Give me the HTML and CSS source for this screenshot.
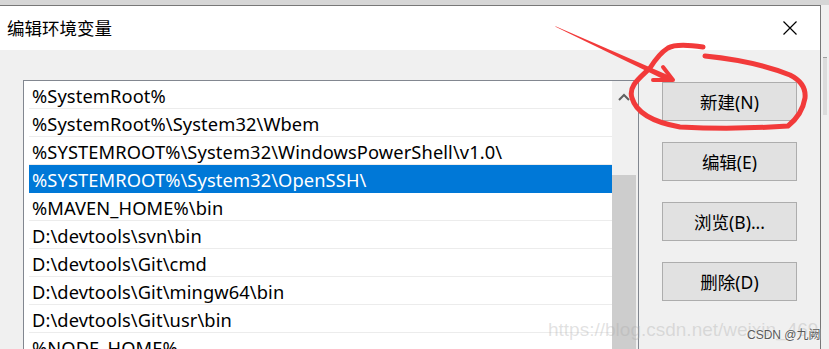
FILE: index.html
```html
<!DOCTYPE html>
<html lang="zh-CN">
<head>
    <meta charset="UTF-8">
    <title>编辑环境变量</title>
    <link rel="stylesheet" href="styles.css">
</head>
<body>
    <div class="screen">
        <!-- Dialog -->
        <div class="dialog">
            <div class="titlebar">
                <span class="title">编辑环境变量</span>
                <span class="close">
                    <svg width="16" height="16" viewBox="0 0 16 16">
                        <path d="M1.5 1.5 L14.5 14.5 M14.5 1.5 L1.5 14.5" stroke="#000" stroke-width="1.2" fill="none"/>
                    </svg>
                </span>
            </div>
            <div class="content">
                <div class="listbox">
                    <ul class="paths">
                        <li>%SystemRoot%</li>
                        <li>%SystemRoot%\System32\Wbem</li>
                        <li>%SYSTEMROOT%\System32\WindowsPowerShell\v1.0\</li>
                        <li class="selected">%SYSTEMROOT%\System32\OpenSSH\</li>
                        <li>%MAVEN_HOME%\bin</li>
                        <li>D:\devtools\svn\bin</li>
                        <li>D:\devtools\Git\cmd</li>
                        <li>D:\devtools\Git\mingw64\bin</li>
                        <li>D:\devtools\Git\usr\bin</li>
                        <li>%NODE_HOME%</li>
                    </ul>
                    <div class="scrollbar">
                        <div class="scroll-up">
                            <svg width="12" height="8" viewBox="0 0 12 8">
                                <path d="M1 7 L6 2 L11 7" stroke="#606060" stroke-width="2" fill="none"/>
                            </svg>
                        </div>
                        <div class="thumb"></div>
                    </div>
                </div>
                <div class="actions">
                    <button>新建(N)</button>
                    <button>编辑(E)</button>
                    <button>浏览(B)...</button>
                    <button>删除(D)</button>
                </div>
            </div>
        </div>
        <!-- window behind the dialog -->
        <div class="behind">
            <div class="behind-bar"></div>
        </div>
    </div>

    <!-- red hand-drawn marks -->
    <svg class="annotation" width="829" height="349" viewBox="0 0 829 349">
        <polygon points="555,26 556,27 667,81 670,76" fill="#f23a3a"/>
        <path d="M653 80 L673 80 L663 67" stroke="#f23a3a" stroke-width="4" fill="none" stroke-linecap="round" stroke-linejoin="round"/>
        <path d="M703 47 C690 45 675 44 668 48 C660 53 655 60 650 68 C640 78 628 86 632 98 C636 112 652 122 680 127 C720 129 760 128 788 126 C798 118 803 110 805 98 C806 88 800 80 790 75 C770 67 745 60 705 56"
              stroke="#f23a3a" stroke-width="5" fill="none" stroke-linecap="round" stroke-linejoin="round"/>
    </svg>

    <div class="watermark">https://blog.csdn.net/weixin_46945846</div>
    <div class="credit">CSDN @九阙</div>
</body>
</html>
```

FILE: styles.css
```css
/* General */
* {
    margin: 0;
    padding: 0;
    box-sizing: border-box;
}
body {
    width: 829px;
    height: 349px;
    overflow: hidden;
    position: relative;
    background: #d6d6d6;
    font-family: "Noto Sans", "Noto Sans CJK SC", sans-serif;
    color: #000;
}
.screen {
    display: flex;
    padding-top: 5px;
    height: 349px;
}

/* Dialog */
.dialog {
    width: 821px;
    flex-shrink: 0;
    display: flex;
    flex-direction: column;
    border-top: 1px solid #777;
    border-right: 1px solid #777;
    background: #f0f0f0;
}
.titlebar {
    height: 44px;
    background: #fff;
    display: flex;
    align-items: center;
    justify-content: space-between;
    padding: 0 22px 0 7px;
}
.title {
    font-size: 17.5px;
    font-family: "Noto Sans CJK SC", sans-serif;
    margin-top: -1px;
}
.close {
    display: flex;
    margin-top: -1px;
}

/* Content */
.content {
    display: flex;
    padding: 30px 0 0 23px;
    flex: 1;
    min-height: 0;
}
.listbox {
    width: 616px;
    border: 1px solid #828790;
    border-bottom: none;
    background: #fff;
    display: flex;
    padding-left: 5px;
}
.paths {
    list-style: none;
    width: 583px;
    overflow: hidden;
}
.paths li {
    height: 28px;
    line-height: 27px;
    padding-left: 3px;
    padding-top: 1px;
    border-bottom: 1px solid #ececec;
    font-size: 18.3px;
    letter-spacing: 0.1px;
    white-space: nowrap;
}
.paths li.selected {
    background: #0078d7;
    color: #fff;
    border-bottom-color: #0078d7;
}
.scrollbar {
    width: 26px;
    background: #f0f0f0;
    display: flex;
    flex-direction: column;
}
.scroll-up {
    height: 94px;
    display: flex;
    justify-content: center;
    padding: 12px 3px 0 0;
}
.thumb {
    flex: 1;
    width: 24px;
    background: #cdcdcd;
}

/* Buttons */
.actions {
    display: flex;
    flex-direction: column;
    gap: 21px;
    padding-top: 2px;
    margin-left: 23px;
}
.actions button {
    width: 135px;
    height: 39px;
    border: 1px solid #adadad;
    background: #e1e1e1;
    font-family: "Noto Sans", "Noto Sans CJK SC", sans-serif;
    font-size: 17.5px;
    color: #000;
}

/* Window behind */
.behind {
    flex: 1;
    background: #f0f0f0;
    padding-top: 52px;
}
.behind-bar {
    border-top: 1px solid #a0a0a0;
    height: 58px;
    margin-left: 2px;
    width: 4px;
    background: #dcdcdc;
}

/* Overlays */
.annotation {
    position: absolute;
    left: 0;
    top: 0;
}
.watermark {
    position: absolute;
    left: 548px;
    top: 319px;
    width: 272px;
    overflow: hidden;
    font-family: "Liberation Sans", sans-serif;
    font-size: 19px;
    color: rgba(170, 170, 170, 0.35);
    white-space: nowrap;
}
.credit {
    position: absolute;
    left: 747px;
    top: 325px;
    font-family: "Liberation Sans", "Noto Sans CJK SC", sans-serif;
    font-size: 12px;
    color: #5a5a5a;
    text-shadow: 0 0 2px #fff;
    white-space: nowrap;
}
```
